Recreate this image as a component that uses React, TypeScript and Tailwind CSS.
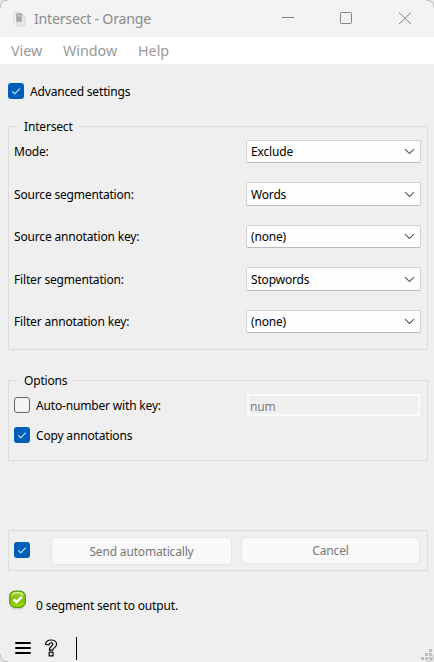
import React from "react";

function Tick({ className = "" }: { className?: string }) {
  return (
    <span className={`block size-4 shrink-0 rounded-[3px] bg-[#005fb8] ${className}`}>
      <svg viewBox="0 0 16 16" className="block size-4" fill="none" stroke="#d9ecff" strokeWidth="1.1">
        <path d="M4.2 8.3 6.8 10.8 11.8 5.7" />
      </svg>
    </span>
  );
}

function Corner({ className }: { className: string }) {
  return (
    <svg viewBox="0 0 8 8" className={`absolute size-2 ${className}`}>
      <path d="M0 0H8Q0 0 0 8Z" fill="#e6e6e6" />
      <path d="M0 8Q.3.3 8 0" fill="none" stroke="#b9b9b9" />
    </svg>
  );
}

function Group({ title, className, children }: { title?: string; className: string; children: React.ReactNode }) {
  return (
    <section className={`relative ml-2 w-[420px] border border-[#dcdcdc] ${className}`}>
      {title && (
        <h2 className="absolute -top-[9px] left-[9px] bg-[#efefef] px-[6px] leading-[18px]">{title}</h2>
      )}
      {children}
    </section>
  );
}

function Field({ label, value, row, box, text }: { label: string; value: string; row: string; box: string; text: string }) {
  return (
    <div className={`flex items-start justify-between pl-[5px] pr-[6px] ${row}`}>
      <span className={text}>{label}</span>
      <div
        className={`flex w-[175px] justify-between rounded-[2px] border border-[#d2d2d2] border-b-[#b9b9b9] bg-[#fdfdfd] pl-1 pr-[5px] ${box}`}
      >
        <span className={`-mt-px ${text}`}>{value}</span>
        <svg viewBox="0 0 11 7" className="h-[7px] w-[11px] self-center" fill="none" stroke="#5c5c5c" strokeWidth="1.1">
          <path d="M1 1.2 5.5 5.5 10 1.2" />
        </svg>
      </div>
    </div>
  );
}

export default function App() {
  return (
    <main className="relative h-[662px] w-[434px] overflow-hidden bg-[#efefef] font-['Noto_Sans',sans-serif] text-[12px] tracking-[-0.17px] text-black">
      <header className="flex h-[37px] items-center bg-[#f3f3f3] pl-[13px] text-[#8c8c8c]">
        <svg viewBox="0 0 13 16" className="h-4 w-[13px]">
          <path d="M1 1h5l3 3v9H1z" fill="#f1f1f1" stroke="#dadada" />
          <path d="M4 3h5l3 3v9H4z" fill="#e6e6e6" stroke="#d4d4d4" />
          <rect x="4" y="3" width="4" height="7" fill="#d0d0d0" stroke="#8c8c8c" />
          <path d="M6 9V5.5" fill="none" stroke="#777" />
        </svg>
        <h1 className="ml-2 text-[14.2px] leading-5 tracking-[-0.24px]">Intersect - Orange</h1>
        <svg viewBox="0 0 132 14" className="ml-auto mr-[22px] h-[14px] w-[132px]" fill="none" stroke="#858585">
          <path d="M2 5.5h12" />
          <rect x="60.5" y=".5" width="11" height="11" rx="1" />
          <path d="m119 .5 12 11.5M131 .5 119 12" />
        </svg>
      </header>
      <nav className="flex h-[27px] items-center bg-white text-[14.3px] tracking-normal text-[#999]">
        <span className="ml-[11px] w-[52px]">View</span>
        <span className="w-[75px]">Window</span>
        <span>Help</span>
      </nav>

      <label className="mt-[19px] flex h-4 items-center pl-2">
        <Tick />
        <span className="ml-[6px] mt-[2px]">Advanced settings</span>
      </label>

      <Group title="Intersect" className="mt-[27px] h-[224px] pt-[13px]">
        <Field label="Mode:" value="Exclude" row="h-[42px]" box="h-[23px]" text="leading-[23px]" />
        <Field label="Source segmentation:" value="Words" row="h-[43px]" box="h-[24px]" text="leading-[25px]" />
        <Field label="Source annotation key:" value="(none)" row="h-[42px]" box="h-[23px]" text="leading-[23px]" />
        <Field label="Filter segmentation:" value="Stopwords" row="h-[43px]" box="h-[24px]" text="leading-[25px]" />
        <Field label="Filter annotation key:" value="(none)" row="h-[42px]" box="h-[23px]" text="leading-[23px]" />
      </Group>

      <Group title="Options" className="mt-[30px] h-[81px] pt-[13px]">
        <div className="flex h-[33px] items-start pl-[5px] pr-[7px]">
          <span className="mt-[3px] size-4 rounded-[3px] border border-[#666] bg-[#f4f4f4]" />
          <span className="ml-[6px] mt-[3px] leading-[18px]">Auto-number with key:</span>
          <div className="ml-auto h-[22px] w-[173px] border-2 border-[#fbfbfb] pl-px leading-[21px] text-[#7d7d7d]">
            num
          </div>
        </div>
        <div className="flex h-4 items-center pl-[5px]">
          <Tick />
          <span className="ml-[6px] mt-[2px]">Copy annotations</span>
        </div>
      </Group>

      <Group className="mt-[69px] flex h-[41px] items-start pl-[5px] pt-[6px] text-[#787878]">
        <Tick className="mt-[5px]" />
        <button className="ml-[21px] h-[28px] w-[181px] rounded-[4px] border border-[#e6e6e6] bg-[#f9f9f9] pt-[2px]">
          Send automatically
        </button>
        <button className="ml-[9px] h-[27px] w-[179px] rounded-[4px] border border-[#e6e6e6] bg-[#f9f9f9] pt-px">
          Cancel
        </button>
      </Group>

      <div className="mt-[19px] flex h-5 items-start pl-[9px]">
        <svg viewBox="0 0 17 20" className="h-5 w-[17px]">
          <defs>
            <linearGradient id="status" x1="0" y1="0" x2="0" y2="1">
              <stop offset="0" stopColor="#a9d93a" />
              <stop offset=".5" stopColor="#7fbd08" />
              <stop offset="1" stopColor="#a4de00" />
            </linearGradient>
          </defs>
          <ellipse cx="8.5" cy="18" rx="5.5" ry="1.6" fill="#cfcfcf" />
          <rect x=".6" y="1.1" width="15.8" height="16.3" rx="5.5" fill="url(#status)" stroke="#5a9a1c" strokeWidth="1.2" />
          <path d="M3 5.5Q4 2.6 8.5 2.6T14 5.5" fill="none" stroke="#d0ee88" strokeWidth="1.1" />
          <path d="M4.5 9.2 7.5 12 13 6.8" fill="none" stroke="#fff" strokeWidth="2.6" />
        </svg>
        <span className="ml-[10px] mt-[7px] leading-[18px]">0 segment sent to output.</span>
      </div>

      <footer className="mt-[27px] flex h-[23px] items-start pl-[15px]">
        <svg viewBox="0 0 16 14" className="mt-[4px] h-[14px] w-4" stroke="#000" strokeWidth="2.2" strokeLinecap="round">
          <path d="M1.1 2h13.8M1.1 7h13.8M1.1 12h13.8" />
        </svg>
        <svg viewBox="0 0 14 18" className="ml-[13px] mt-[2px] h-[18px] w-[14px]" fill="none" stroke="#000" strokeWidth="1.2" strokeLinejoin="round">
          <path d="M1.5 5.5C1.8 2.6 4 1 7.1 1s5.5 1.7 5.5 4.3c0 3.2-3.8 3.4-3.8 5.9H5.4c0-4 3.5-4 3.5-5.9 0-1-.8-1.5-1.9-1.5-1.2 0-1.9.7-2.1 2zM5.2 13.2h3.8v3.7H5.2z" />
        </svg>
        <span className="ml-[18px] h-[23px] w-px bg-black" />
        <svg viewBox="0 0 11 11" className="ml-auto mr-[2px] mt-[12px] size-[11px]" fill="#bdbdbd" shapeRendering="crispEdges">
          <path d="M8 0h3v3H8zM4 4h3v3H4zM8 4h3v3H8zM0 8h3v3H0zM4 8h3v3H4zM8 8h3v3H8z" />
        </svg>
      </footer>

      <Corner className="left-0 top-0" />
      <Corner className="right-0 top-0 rotate-90" />
      <Corner className="bottom-0 left-0 -rotate-90" />
      <Corner className="bottom-0 right-0 rotate-180" />
    </main>
  );
}
